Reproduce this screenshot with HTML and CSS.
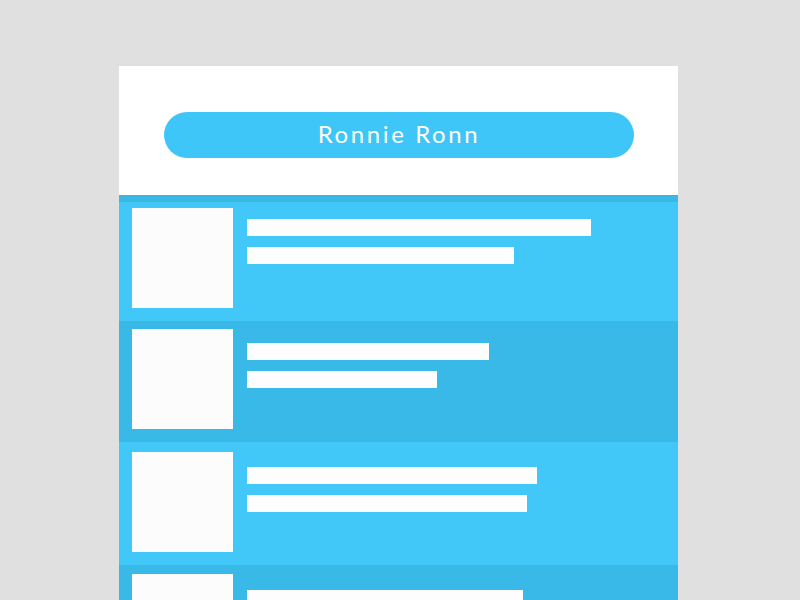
FILE: index.html
```html
<!DOCTYPE html>
<html>
<head>
<meta charset="utf-8">
<link rel="stylesheet" href="styles.css">
</head>
<body>
<div class="card">
  <div class="header">
    <div class="pill">Ronnie Ronn</div>
  </div>
  <div class="strip"></div>
  <div class="list">
    <div class="row light r1">
      <div class="thumb"></div>
      <div class="bars">
        <div class="bar" style="width:344px"></div>
        <div class="bar" style="width:267px"></div>
      </div>
    </div>
    <div class="row dark r2">
      <div class="thumb"></div>
      <div class="bars">
        <div class="bar" style="width:242px"></div>
        <div class="bar" style="width:190px"></div>
      </div>
    </div>
    <div class="row light r3">
      <div class="thumb"></div>
      <div class="bars">
        <div class="bar" style="width:290px"></div>
        <div class="bar" style="width:280px"></div>
      </div>
    </div>
    <div class="row dark r4">
      <div class="thumb"></div>
      <div class="bars">
        <div class="bar" style="width:276px"></div>
        <div class="bar" style="width:220px"></div>
      </div>
    </div>
  </div>
</div>
</body>
</html>
```

FILE: styles.css
```css
html, body {
  margin: 0;
  padding: 0;
  height: 100%;
  overflow: hidden;
  background: #e0e0e0;
  font-family: Lato, "Open Sans", sans-serif;
}
.card {
  width: 559px;
  margin: 66px 0 0 119px;
  background: #ffffff;
}
.header {
  height: 129px;
  padding: 46px 44px 0 45px;
  box-sizing: border-box;
}
.pill {
  height: 46px;
  border-radius: 23px;
  background: #3ec6f8;
  color: #ffffff;
  display: flex;
  align-items: center;
  justify-content: center;
  font-size: 24px;
  letter-spacing: 2.6px;
  font-weight: 400;
  padding-bottom: 3px;
  box-sizing: border-box;
}
.strip {
  height: 7px;
  background: #3ab7e3;
}
.row {
  display: flex;
  align-items: flex-start;
  padding-left: 13px;
  box-sizing: border-box;
}
.light { background: #41c8f9; }
.dark { background: #39b9e8; }
.r1 { height: 119px; padding-top: 6px; }
.r1 .bars { padding-top: 11px; }
.r2 { height: 121px; padding-top: 8px; }
.r2 .bars { padding-top: 14px; }
.r3 { height: 123px; padding-top: 10px; }
.r3 .bars { padding-top: 15px; }
.r4 { height: 123px; padding-top: 9px; }
.r4 .bars { padding-top: 16px; }
.thumb {
  width: 101px;
  height: 100px;
  background: #fcfcfc;
  flex: none;
}
.bars {
  margin-left: 14px;
  display: flex;
  flex-direction: column;
  gap: 11px;
}
.bar {
  height: 17px;
  background: #fdfdfd;
}
```
